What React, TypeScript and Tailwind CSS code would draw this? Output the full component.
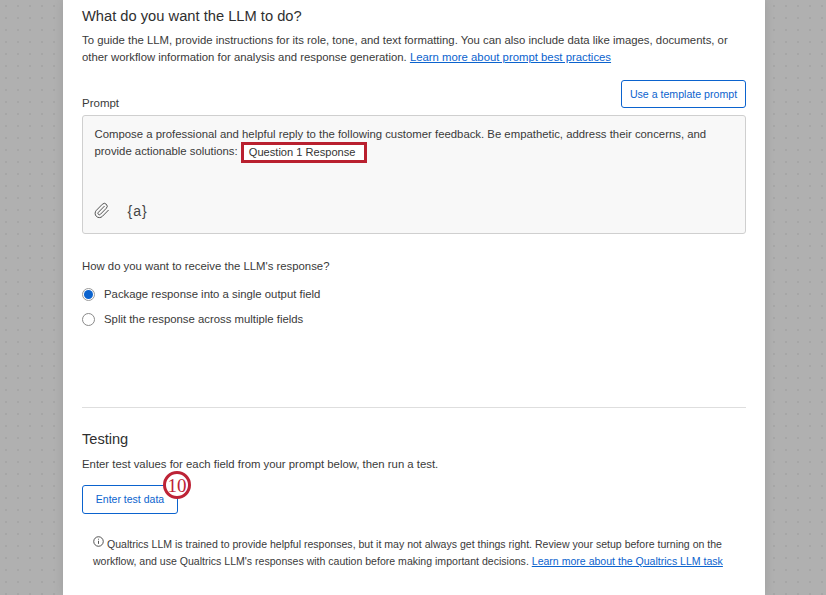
import { Paperclip } from "lucide-react";

// Circled step number that sits on top of the test button
function StepBadge() {
  return (
    <span className="absolute left-[81px] top-[-14px] flex h-[28px] w-[28px] items-center justify-center rounded-full border-[3px] border-[#bd2336] bg-white font-['Liberation_Serif',serif] text-[19px] leading-none text-[#bd2336]">
      10
    </span>
  );
}

function Radio({ checked, label }: { checked?: boolean; label: string }) {
  return (
    <div className="flex h-[25px] items-center">
      <span
        className={
          checked
            ? "flex h-[13px] w-[13px] items-center justify-center rounded-full border border-[#9a9a9a] bg-white"
            : "h-[13px] w-[13px] rounded-full border border-[#8a8a8a] bg-white"
        }
      >
        {checked && <span className="h-[9px] w-[9px] rounded-full bg-[#0b63ce]" />}
      </span>
      <span className="ml-[9px]">{label}</span>
    </div>
  );
}

export default function App() {
  return (
    <div className="h-[595px] w-[826px] overflow-hidden bg-[#b0b0b0] bg-[radial-gradient(circle,#a6a6a6_1px,transparent_1.5px)] bg-[size:12px_12px] font-['Liberation_Sans',sans-serif] text-[11.35px] leading-[17px] text-[#3a3a3a]">
      <div className="ml-[63px] h-[595px] w-[702px] bg-white px-[19px] pt-[6px] shadow-[0_0_10px_rgba(0,0,0,0.1)]">
        <h2 className="text-[14.7px] leading-[20px] text-[#2f2f2f]">What do you want the LLM to do?</h2>
        <p className="mt-[6px] leading-[17px]">
          To guide the LLM, provide instructions for its role, tone, and text formatting. You can also include data like images, documents, or
          <br />
          other workflow information for analysis and response generation.{" "}
          <a className="text-[#0b63ce] underline">Learn more about prompt best practices</a>
        </p>

        <div className="mt-[14px] flex items-end justify-between">
          <span className="mb-[-4px] text-[11.5px] leading-[17px]">Prompt</span>
          <button className="h-[28px] w-[125px] rounded-[3px] border border-[#0b63ce] text-[10.6px] text-[#0b63ce]">
            Use a template prompt
          </button>
        </div>

        <div className="mt-[7px] flex h-[119px] flex-col rounded-[3px] border border-[#cfcfcf] bg-[#f8f8f8] pl-[11.5px] pr-[12px] pt-[10px]">
          <p className="leading-[17px]">
            Compose a professional and helpful reply to the following customer feedback. Be empathetic, address their concerns, and
            <br />
            provide actionable solutions:{" "}
            <span className="my-[-4px] inline-block h-[21px] w-[126px] border-[3px] border-[#b9202f] bg-white pl-[5px] align-middle text-[11.1px] leading-[15px] text-[#333]">
              Question 1 Response
            </span>
          </p>
          <div className="mt-[42px] flex items-center text-[#444]">
            <Paperclip className="ml-[-2px] h-[17px] w-[17px]" strokeWidth={1.3} />
            <span className="ml-[18px] text-[14px] leading-none tracking-[1px]">{"{a}"}</span>
          </div>
        </div>

        <p className="mt-[24px]">How do you want to receive the LLM's response?</p>
        <div className="mt-[7px]">
          <Radio checked label="Package response into a single output field" />
          <Radio label="Split the response across multiple fields" />
        </div>

        <div className="mt-[75px] border-t border-[#dedede]" />

        <h2 className="mt-[21px] text-[14.6px] leading-[20px] text-[#2f2f2f]">Testing</h2>
        <p className="mt-[7px]">Enter test values for each field from your prompt below, then run a test.</p>

        <div className="relative mt-[12px] w-fit">
          <button className="h-[29px] w-[96px] rounded-[3px] border border-[#0b63ce] text-[10.5px] text-[#0b63ce]">
            Enter test data
          </button>
          <StepBadge />
        </div>

        <p className="mt-[22px] pl-[11px] text-[10.55px] leading-[17px]">
          <svg className="mr-[3px] inline-block h-[11px] w-[11px] align-[1px]" viewBox="0 0 12 12" fill="none" stroke="#444" strokeWidth="1">
            <circle cx="6" cy="6" r="5.2" />
            <path d="M6 5.2v3.4M6 3v1" />
          </svg>
          Qualtrics LLM is trained to provide helpful responses, but it may not always get things right. Review your setup before turning on the
          <br />
          workflow, and use Qualtrics LLM's responses with caution before making important decisions.{" "}
          <a className="text-[#0b63ce] underline">Learn more about the Qualtrics LLM task</a>
        </p>
      </div>
    </div>
  );
}
